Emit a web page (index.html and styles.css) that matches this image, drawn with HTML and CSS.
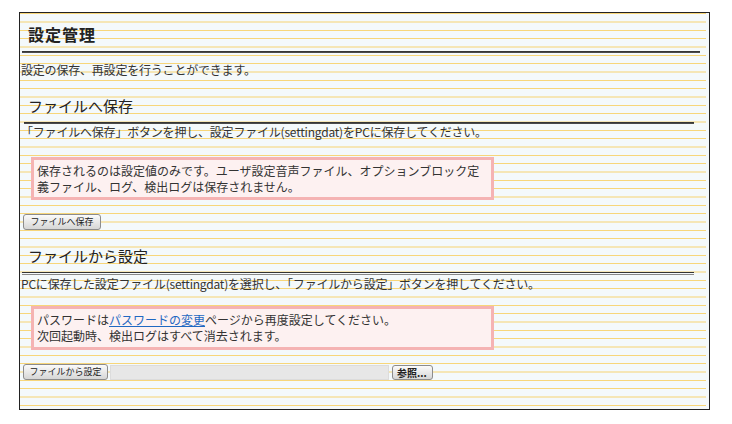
FILE: index.html
```html
<!DOCTYPE html>
<html lang="ja">
<head>
    <meta charset="UTF-8">
    <meta name="viewport" content="width=device-width, initial-scale=1.0">
    <title>設定管理</title>
    <link rel="stylesheet" href="styles.css">
</head>
<body>
    <div class="container">
        <h1>設定管理</h1>
        <hr class="rule-main">
        <p class="texto">設定の保存、再設定を行うことができます。</p>

        <h2>ファイルへ保存</h2>
        <hr class="rule-sec">
        <p class="texto">「ファイルへ保存」ボタンを押し、設定ファイル(settingdat)をPCに保存してください。</p>
        <div class="aviso">保存されるのは設定値のみです。ユーザ設定音声ファイル、オプションブロック定義ファイル、ログ、検出ログは保存されません。</div>
        <div class="linha-botoes">
            <button class="btn">ファイルへ保存</button>
        </div>

        <h2 class="h2-baixo">ファイルから設定</h2>
        <hr class="rule-dupla">
        <p class="texto">PCに保存した設定ファイル(settingdat)を選択し、「ファイルから設定」ボタンを押してください。</p>
        <div class="aviso aviso-2">パスワードは<a href="#">パスワードの変更</a>ページから再度設定してください。<br>次回起動時、検出ログはすべて消去されます。</div>
        <div class="linha-botoes linha-arquivo">
            <button class="btn btn-largo">ファイルから設定</button>
            <input type="text" class="campo-arquivo" readonly>
            <button class="btn btn-ref">参照...</button>
        </div>
    </div>
</body>
</html>
```

FILE: styles.css
```css
body {
    margin: 0;
    padding: 12px 0 0 19px;
    font-family: "Noto Sans CJK JP", sans-serif;
    color: #333;
    background: #fff;
}

.container {
    box-sizing: border-box;
    width: 691px;
    height: 398px;
    border: 1px solid #222;
    background-color: #f4f9fb;
    background-image: linear-gradient(to bottom,
        #f7d67a 0, #f7d67a 1px,
        transparent 1px, transparent 8px,
        #f5e6b6 8px, #f5e6b6 10px,
        transparent 10px, transparent 17px,
        #f7d67a 17px, #f7d67a 18px,
        transparent 18px);
    background-size: calc(100% - 3px) 25px;
    background-repeat: repeat-y;
    overflow: hidden;
}

h1 {
    margin: 11px 0 0 8px;
    font-size: 16px;
    line-height: 20px;
    font-weight: bold;
    letter-spacing: 1px;
    color: #222;
}

h2 {
    margin: 18px 0 0 8px;
    font-size: 15px;
    line-height: 20px;
    font-weight: normal;
    color: #222;
}

.h2-baixo {
    margin-top: 16px;
}

hr {
    border: none;
    padding: 0;
}

.rule-main {
    margin: 7px 0 0 2px;
    width: 678px;
    height: 2px;
    background: linear-gradient(#2b2b2b, #555);
}

.rule-sec {
    margin: 6px 0 0 4px;
    width: 670px;
    height: 2px;
    background: linear-gradient(#2b2b2b, #555);
}

.rule-dupla {
    margin: 6px 0 0 2px;
    width: 672px;
    height: 1px;
    border-top: 1px solid #333;
    border-bottom: 1px solid #888;
}

.texto {
    margin: 9px 0 0 1px;
    font-size: 12px;
    line-height: 16px;
    letter-spacing: -0.2px;
}

.rule-sec + .texto {
    margin-top: 0;
}

.rule-dupla + .texto {
    margin-top: 1px;
}

.aviso {
    box-sizing: border-box;
    width: 463px;
    margin: 17px 0 0 11px;
    padding: 3px 6px 2px 3px;
    border: 3px solid #f5b3b3;
    background: #fdf1f1;
    font-size: 12px;
    line-height: 16px;
    color: #333;
}

.aviso-2 {
    margin-top: 14px;
    padding-bottom: 3px;
}

.aviso a {
    color: #1f68c2;
    text-decoration: underline;
}

.linha-botoes {
    display: flex;
    align-items: center;
    margin: 14px 0 0 3px;
}

.btn {
    box-sizing: border-box;
    width: 78px;
    height: 16px;
    padding: 0;
    border: 1px solid #8c8c8c;
    border-radius: 3px;
    background: linear-gradient(#fbfbfb, #d6d6d6);
    font-family: "Noto Sans CJK JP", sans-serif;
    font-size: 9px;
    line-height: 14px;
    color: #222;
}

.btn-largo {
    width: 85px;
}

.campo-arquivo {
    box-sizing: border-box;
    width: 279px;
    height: 15px;
    margin: 0 0 0 2px;
    padding: 0;
    border: 1px solid #dcdcdc;
    background: #e7e7e7;
}

.btn-ref {
    width: 41px;
    height: 15px;
    margin-left: 3px;
    font-size: 10px;
    font-weight: bold;
    text-align: left;
    padding-left: 4px;
}
```
